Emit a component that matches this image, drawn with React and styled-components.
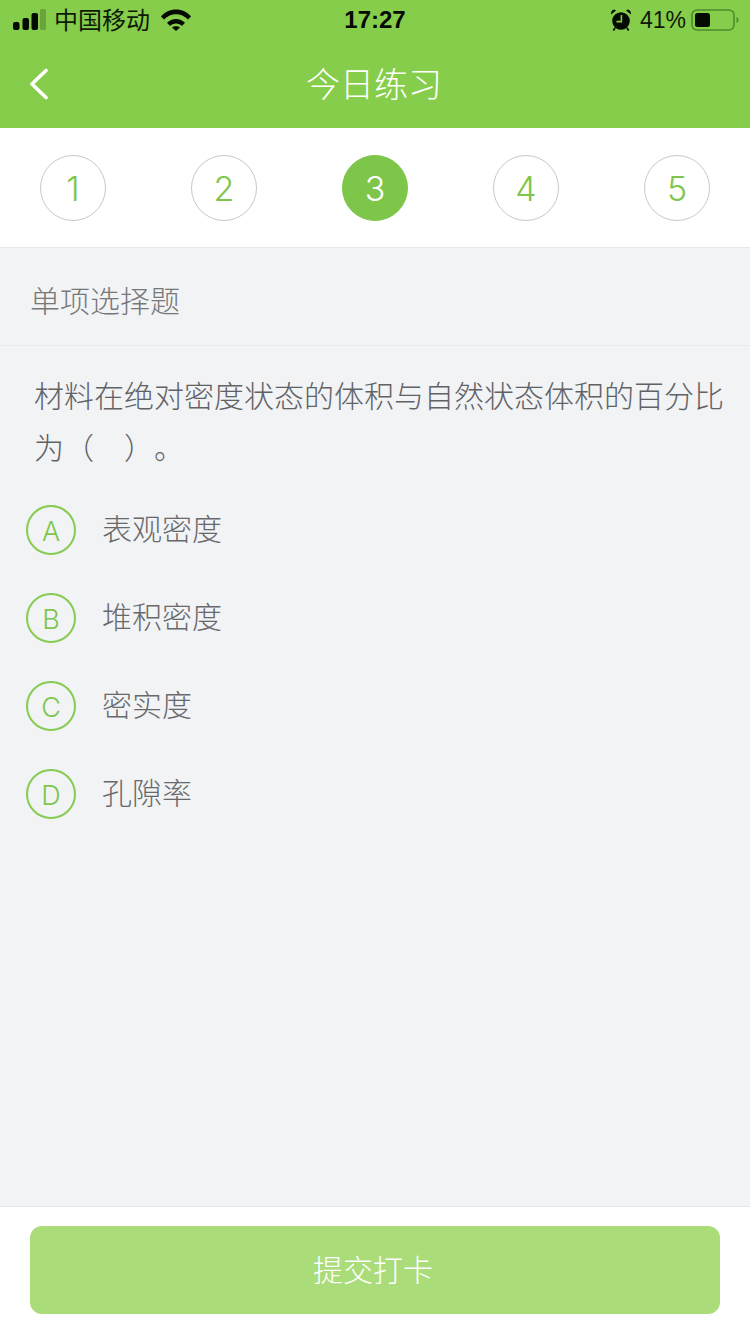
import styled, { createGlobalStyle } from "styled-components";

const GREEN = "#87cd4c";
const CJK = `"Noto Sans CJK SC", "Liberation Sans", sans-serif`;

const GlobalStyle = createGlobalStyle`
  html, body {
    margin: 0;
    padding: 0;
    background: #f2f3f5;
  }
  * {
    box-sizing: border-box;
  }
`;

const Page = styled.div`
  width: 750px;
  height: 1334px;
  display: flex;
  flex-direction: column;
  overflow: hidden;
  font-family: "Liberation Sans", ${CJK};
  background: #f2f3f5;
`;

const Header = styled.header`
  height: 128px;
  flex: none;
  background: ${GREEN};
`;

const StatusBar = styled.div`
  height: 40px;
  padding: 0 11px 0 13px;
  display: grid;
  grid-template-columns: 1fr auto 1fr;
  align-items: center;
  color: #0e1a06;
`;

const StatusLeft = styled.div`
  display: flex;
  align-items: center;
`;

const Carrier = styled.span`
  margin: 0 11px 2px 8px;
  font-family: ${CJK};
  font-size: 24px;
  line-height: 38px;
  white-space: nowrap;
`;

const Clock = styled.span`
  margin-right: 2px;
  font-size: 24px;
  font-weight: 700;
  line-height: 40px;
  color: #050a02;
`;

const StatusRight = styled.div`
  display: flex;
  align-items: center;
  justify-content: flex-end;
`;

const Percent = styled.span`
  margin: 0 5px 0 9px;
  font-size: 23px;
  line-height: 40px;
`;

const NavBar = styled.div`
  position: relative;
  height: 88px;
  display: flex;
  align-items: center;
  justify-content: center;
`;

const BackIcon = styled.svg`
  position: absolute;
  left: 28px;
  top: 28px;
`;

const Title = styled.h1`
  margin: 0 2px 2px 0;
  font-family: ${CJK};
  font-size: 34px;
  font-weight: 300;
  color: #fff;
  line-height: 86px;
`;

const Stepper = styled.nav`
  height: 120px;
  flex: none;
  padding: 27px 40px 0;
  display: flex;
  justify-content: space-between;
  align-items: flex-start;
  background: #fff;
  border-bottom: 1px solid #e6e7e9;
`;

const Step = styled.div`
  width: 66px;
  height: 66px;
  border-radius: 50%;
  display: flex;
  align-items: center;
  justify-content: center;
  font-family: Inter, "Liberation Sans", sans-serif;
  font-size: 34px;
  font-weight: 300;
  color: ${(p) => (p.$active ? "#fff" : "#7ec64a")};
  background: ${(p) => (p.$active ? "#7ec64a" : "#fff")};
  border: 1px solid ${(p) => (p.$active ? "#7ec64a" : "#c9c9c9")};
`;

const Main = styled.main`
  flex: 1;
`;

const SectionLabel = styled.div`
  height: 98px;
  padding: 4px 0 0 30px;
  display: flex;
  align-items: center;
  font-family: ${CJK};
  font-size: 30px;
  font-weight: 300;
  color: #77787a;
  border-bottom: 1px solid #e9eaec;
`;

const Question = styled.p`
  margin: 0;
  padding: 22px 20px 0 34px;
  font-family: ${CJK};
  font-size: 30px;
  font-weight: 300;
  line-height: 52px;
  color: #616265;
  text-spacing-trim: space-all;
`;

const Options = styled.ul`
  margin: 0;
  padding: 33px 0 0 26px;
  list-style: none;
  display: flex;
  flex-direction: column;
  gap: 38px;
`;

const Option = styled.li`
  height: 50px;
  display: flex;
  align-items: center;
`;

const OptionBadge = styled.span`
  width: 50px;
  height: 50px;
  flex: none;
  padding-top: 2px;
  border-radius: 50%;
  border: 2px solid #86cb52;
  display: flex;
  align-items: center;
  justify-content: center;
  font-family: Inter, "Liberation Sans", sans-serif;
  font-size: 27px;
  font-weight: 300;
  color: #7ec64a;
`;

const OptionText = styled.span`
  margin: 0 0 6px 26px;
  font-family: ${CJK};
  font-size: 30px;
  font-weight: 300;
  color: #68696c;
`;

const Footer = styled.footer`
  height: 128px;
  flex: none;
  padding: 19px 30px 0;
  background: #fff;
  border-top: 1px solid #e6e7e9;
`;

const SubmitButton = styled.button`
  width: 100%;
  height: 88px;
  padding: 0 4px 4px 0;
  border: 0;
  border-radius: 12px;
  background: #aadc79;
  color: #fff;
  font-family: ${CJK};
  font-size: 30px;
  font-weight: 300;
`;

const steps = [1, 2, 3, 4, 5];

const choices = [
  ["A", "表观密度"],
  ["B", "堆积密度"],
  ["C", "密实度"],
  ["D", "孔隙率"],
];

function SignalIcon() {
  return (
    <svg width="33" height="22" viewBox="0 0 33 22">
      <rect x="0" y="13" width="6.5" height="8" rx="2" fill="#050a02" />
      <rect x="9.5" y="9" width="6.5" height="12" rx="2" fill="#050a02" />
      <rect x="18.5" y="4" width="6.5" height="17" rx="2" fill="#050a02" />
      <rect x="27" y="0" width="6" height="21" rx="1.5" fill="#6aa33c" />
    </svg>
  );
}

function WifiIcon() {
  return (
    <svg width="30" height="22" viewBox="0 0 30 22">
      <path d="M0 7.4C4 3 9 .5 15 .5S26 3 30 7.4L27 10.6C23.5 7 19.5 5.2 15 5.2S6.5 7 3 10.6Z" fill="#050a02" />
      <path d="M6 13.8C8.5 11.3 11.5 10 15 10S21.5 11.3 24 13.8L21 17C19.5 15.5 17.5 14.6 15 14.6S10.5 15.5 9 17Z" fill="#050a02" />
      <path d="M11 18.5C12 17.6 13.5 17.2 15 17.2S18 17.6 19 18.5L15 22Z" fill="#050a02" />
    </svg>
  );
}

function AlarmIcon() {
  return (
    <svg width="20" height="22" viewBox="0 0 20 22">
      <circle cx="10" cy="12" r="8.8" fill="#050a02" />
      <path d="M10.4 6V12.6H5.5" fill="none" stroke="#87cd4c" strokeWidth="1.6" />
      <path d="M0 5.6 5 1.6 3 .6C1.2 .8 -.2 3 0 5.6ZM20 5.6 15 1.6 17 .6C18.8 .8 20.2 3 20 5.6Z" fill="#050a02" />
      <path d="M4 19 2.4 21.4M16 19 17.6 21.4" stroke="#050a02" strokeWidth="1.8" />
    </svg>
  );
}

function BatteryIcon() {
  return (
    <svg width="48" height="24" viewBox="0 0 48 24">
      <rect x="1" y="2" width="42" height="20" rx="5" fill="none" stroke="#4f8a2a" strokeWidth="1.6" />
      <rect x="4" y="5" width="15" height="14" rx="2.5" fill="#050a02" />
      <path d="M45.5 9c1.5.6 2 1.7 2 3s-.5 2.4-2 3Z" fill="#4f8a2a" />
    </svg>
  );
}

export default function App() {
  return (
    <Page>
      <GlobalStyle />
      <Header>
        <StatusBar>
          <StatusLeft>
            <SignalIcon />
            <Carrier>中国移动</Carrier>
            <WifiIcon />
          </StatusLeft>
          <Clock>17:27</Clock>
          <StatusRight>
            <AlarmIcon />
            <Percent>41%</Percent>
            <BatteryIcon />
          </StatusRight>
        </StatusBar>
        <NavBar>
          <BackIcon width="22" height="32" viewBox="0 0 22 32">
            <path d="M18 2.5 4 16l14 13.5" fill="none" stroke="#fff" strokeWidth="3.6" strokeLinecap="round" strokeLinejoin="round" />
          </BackIcon>
          <Title>今日练习</Title>
        </NavBar>
      </Header>
      <Stepper>
        {steps.map((n) => (
          <Step key={n} $active={n === 3}>
            {n}
          </Step>
        ))}
      </Stepper>
      <Main>
        <SectionLabel>单项选择题</SectionLabel>
        <Question>材料在绝对密度状态的体积与自然状态体积的百分比为（　）。</Question>
        <Options>
          {choices.map(([letter, text]) => (
            <Option key={letter}>
              <OptionBadge>{letter}</OptionBadge>
              <OptionText>{text}</OptionText>
            </Option>
          ))}
        </Options>
      </Main>
      <Footer>
        <SubmitButton>提交打卡</SubmitButton>
      </Footer>
    </Page>
  );
}
